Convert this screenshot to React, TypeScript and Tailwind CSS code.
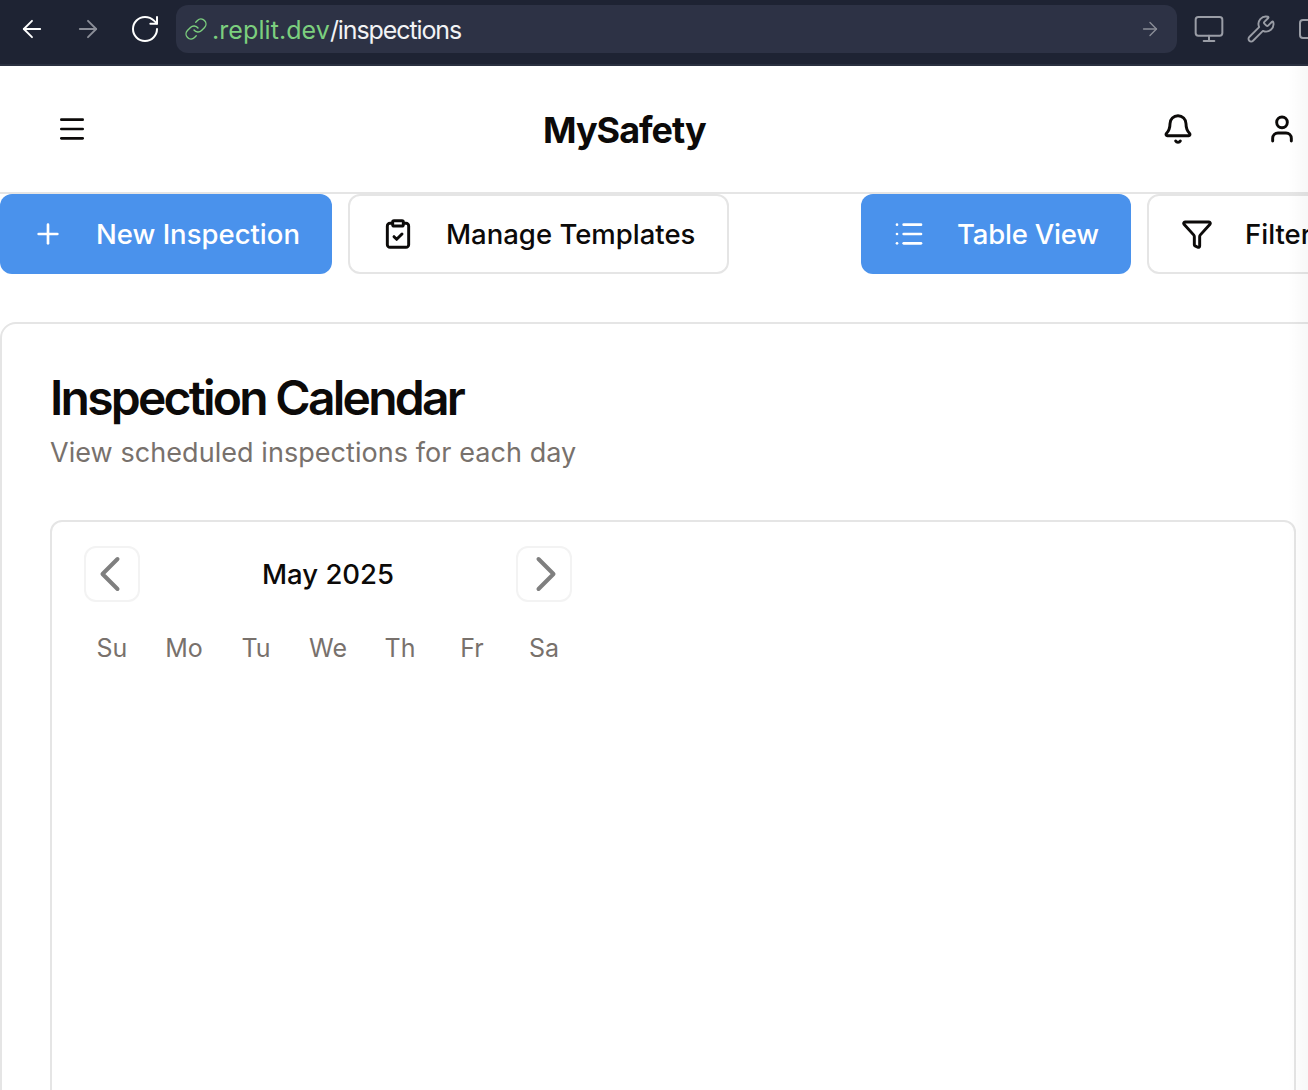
import React from "react";
import { ArrowLeft, ArrowRight, RotateCw, Link, Monitor, Wrench, Menu, Bell, User, Plus, ClipboardCheck, List, Filter, ChevronLeft, ChevronRight } from "lucide-react";

const days = ["Su", "Mo", "Tu", "We", "Th", "Fr", "Sa"];

export default function App() {
  return (
    <div className="relative h-[1090px] w-[1308px] overflow-hidden bg-white font-['Inter',sans-serif] text-[#0c0a09]">
      <div className="flex h-[66px] items-start border-b-2 border-[#2a3040] bg-[#1e2333]">
        <div className="flex h-[58px] flex-none items-center pl-[18px]">
          <ArrowLeft className="h-7 w-7 text-white" strokeWidth={1.6} />
          <ArrowRight className="ml-[28px] h-7 w-7 text-[#8b8e98]" strokeWidth={1.6} />
          <RotateCw className="ml-[27px] h-[32px] w-[32px] text-white" strokeWidth={1.5} />
        </div>
        <div className="ml-[15px] mt-[5px] flex h-[48px] w-[1001px] flex-none items-center rounded-xl bg-[#2d3245] pl-[8px] pr-[16px] text-[25px]">
          <Link className="h-6 w-6 text-[#7ccf7e]" strokeWidth={1.4} />
          <span className="ml-[4px] pt-[3px] tracking-[0.08px] text-[#7ccf7e]">.replit.dev</span>
          <span className="pt-[3px] tracking-[-1.1px] text-[#f2f3f5]">/inspections</span>
          <ArrowRight className="ml-auto h-[22px] w-[22px] text-[#8b8e98]" strokeWidth={1.5} />
        </div>
        <div className="flex h-[58px] flex-none items-center pl-[16px]">
          <Monitor className="h-8 w-8 text-[#9a9da6]" strokeWidth={1.5} />
          <Wrench className="ml-[21px] h-[30px] w-[30px] text-[#9a9da6]" strokeWidth={1.5} />
          <div className="ml-[23px] h-5 w-5 flex-none rounded border-2 border-[#9a9da6]" />
        </div>
      </div>

      <header className="relative flex h-[128px] items-center border-b-2 border-[#e5e5e5]">
        <Menu className="ml-[56px] h-8 w-8 text-[#0c0a09]" strokeWidth={2} />
        <h1 className="absolute left-[543px] top-[41px] text-[36px] leading-[46px] font-bold tracking-[-1px]">MySafety</h1>
        <Bell className="ml-auto h-8 w-8 text-[#0c0a09]" strokeWidth={2.2} />
        <User className="ml-[72px] mr-[10px] h-8 w-8 text-[#0c0a09]" strokeWidth={2.2} />
      </header>

      <div className="flex h-[80px] items-stretch text-[27.5px] font-[450]">
        <button className="flex w-[332px] flex-none items-center rounded-xl bg-[#4a92ec] pl-[32px] text-white">
          <Plus className="h-8 w-8" strokeWidth={2} />
          <span className="ml-[32px] pt-[2px]">New Inspection</span>
        </button>
        <button className="ml-[16px] flex w-[381px] flex-none items-center rounded-xl border-2 border-[#e5e5e5] bg-white pl-[32px]">
          <ClipboardCheck className="h-8 w-8" strokeWidth={2.2} />
          <span className="ml-[32px] pt-[2px]">Manage Templates</span>
        </button>
        <button className="ml-[132px] flex w-[270px] flex-none items-center rounded-xl bg-[#4a92ec] pl-[32px] text-white">
          <List className="h-8 w-8" strokeWidth={2} />
          <span className="ml-[32px] pt-[2px] tracking-[-0.2px]">Table View</span>
        </button>
        <button className="ml-[16px] flex w-[200px] flex-none items-center rounded-xl border-2 border-[#e5e5e5] bg-white pl-[32px]">
          <Filter className="h-8 w-8" strokeWidth={2.2} />
          <span className="ml-[32px] pt-[2px]">Filter</span>
        </button>
      </div>

      <section className="mt-[48px] h-[900px] w-[1340px] rounded-2xl border-2 border-[#e5e5e5] px-[48px] pt-[44px]">
        <h2 className="text-[48px] leading-[60px] font-semibold tracking-[-2.75px]">Inspection Calendar</h2>
        <p className="mt-[5px] text-[27px] leading-[40px] tracking-[0.06px] text-[#78716c]">View scheduled inspections for each day</p>
        <div className="mt-[47px] h-[700px] w-[1246px] rounded-xl border-2 border-[#e5e5e5] px-[32px] pt-[24px]">
          <div className="flex w-[488px] items-center justify-between">
            <button className="flex h-[56px] w-[56px] flex-none items-center justify-center rounded-xl border-2 border-[#f3f3f3] text-[#7f7f7f]">
              <ChevronLeft className="h-[60px] w-[60px] flex-none -translate-x-[2px]" strokeWidth={1.6} />
            </button>
            <span className="pt-[2px] text-[27.5px] font-[450]">May 2025</span>
            <button className="flex h-[56px] w-[56px] flex-none items-center justify-center rounded-xl border-2 border-[#f3f3f3] text-[#7f7f7f]">
              <ChevronRight className="h-[60px] w-[60px] flex-none translate-x-[2px]" strokeWidth={1.6} />
            </button>
          </div>
          <div className="-ml-[8px] mt-[26px] flex w-[504px]">
            {days.map((d) => (
              <div key={d} className="w-[72px] flex-none text-center text-[25px] leading-[40px] text-[#78716c]">{d}</div>
            ))}
          </div>
        </div>
      </section>

      <div className="absolute right-0 top-[66px] h-[1024px] w-[20px] bg-gradient-to-r from-transparent to-black/[0.03]" />
    </div>
  );
}
